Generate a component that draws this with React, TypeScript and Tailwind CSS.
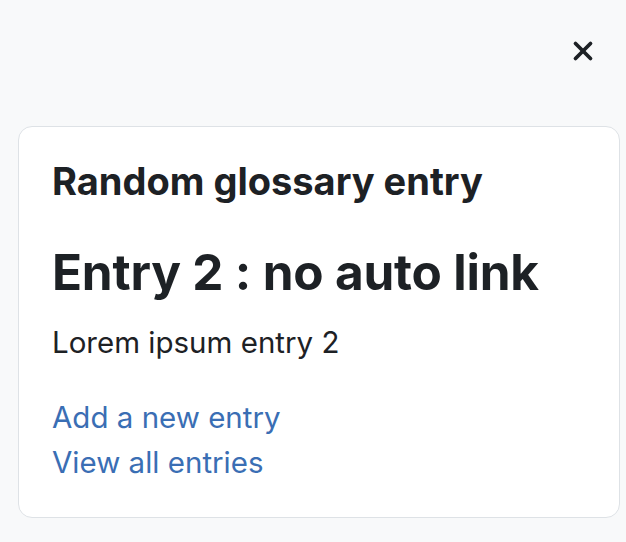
import { X } from "lucide-react";

export default function App() {
  return (
    <div
      className="min-h-[542px] w-[626px] bg-[#f8f9fa] text-[#1d2125]"
      style={{ fontFamily: "Inter, 'Noto Sans', sans-serif" }}
    >
      {/* Drawer header */}
      <div className="flex justify-end px-[27px] pt-[35px] h-[126px]">
        <button className="h-[32px] w-[32px] flex items-center justify-center text-[#1d2125]">
          <X className="w-[30px] h-[30px]" strokeWidth={3} />
        </button>
      </div>

      {/* Block card */}
      <div className="ml-[18px] mr-[6px] bg-white border border-[#dee2e6] rounded-[14px] px-[33px] pt-[32px] pb-[32px]">
        <h5 className="text-[38px] font-bold leading-[1.2]">Random glossary entry</h5>
        <h3 className="mt-[38px] text-[49.5px] font-bold leading-[1.2] tracking-[-0.004em] [font-feature-settings:'calt'_0]">
          Entry 2 : no auto link
        </h3>
        <p className="mt-[18px] text-[29.5px] leading-[1.5]">Lorem ipsum entry 2</p>
        <div className="mt-[31px] flex flex-col text-[29.5px] leading-[45px] text-[#3a6eb4]">
          <a href="#">Add a new entry</a>
          <a href="#">View all entries</a>
        </div>
      </div>
    </div>
  );
}
